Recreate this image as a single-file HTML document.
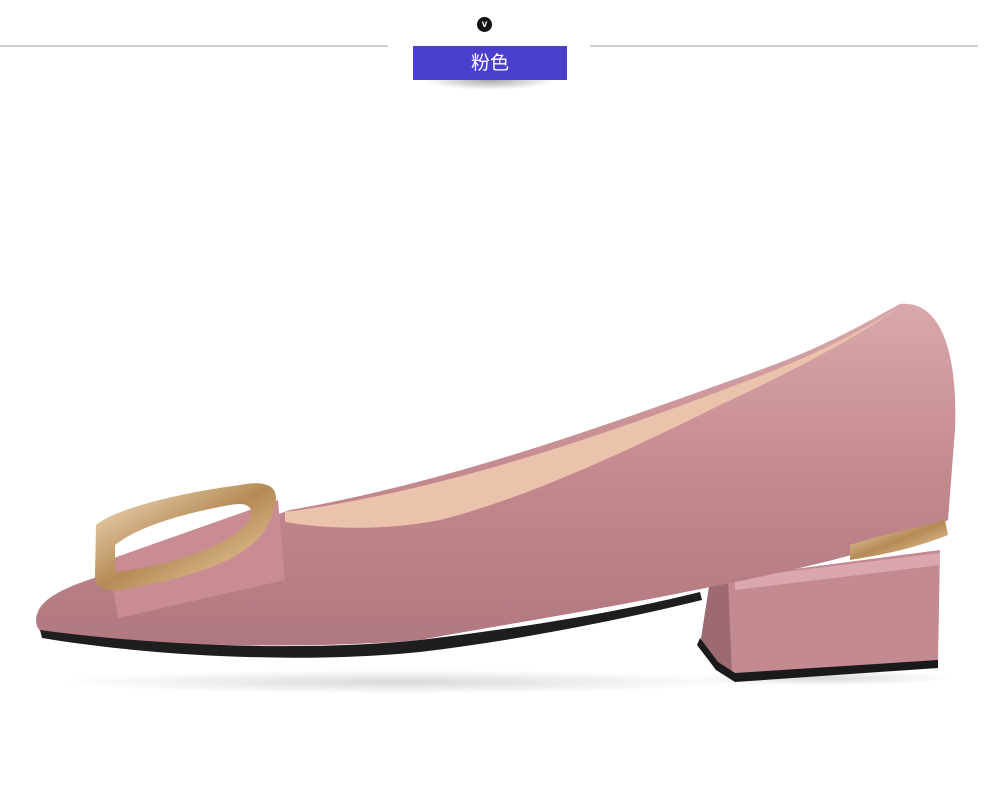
<!DOCTYPE html>
<html><head><meta charset="utf-8"><style>
body{margin:0;width:990px;height:793px;background:#fff;overflow:hidden;position:relative;font-family:"Liberation Sans","Noto Sans CJK SC",sans-serif}
.l{position:absolute;top:45px;height:2px;background:#d0d0d0}
.tab{position:absolute;left:413px;top:46px;width:154px;height:34px;background:#4a3fcc;color:#fff;font-size:19px;text-align:center;line-height:36px}
.sh{position:absolute;left:425px;top:80px;width:130px;height:10px;background:radial-gradient(ellipse at 50% 0,rgba(0,0,0,.35),rgba(0,0,0,0) 70%)}
.v{position:absolute;left:477px;top:17px;width:15px;height:15px;border-radius:50%;background:#111;color:#fff;font-size:10px;font-weight:bold;text-align:center;line-height:15px}
</style></head><body>
<div class="l" style="left:0;width:388px"></div>
<div class="l" style="left:590px;width:388px"></div>
<div class="v">v</div>
<div class="tab">粉色</div><div class="sh"></div>
<svg width="990" height="793" style="position:absolute;left:0;top:0">
<defs>
<linearGradient id="p" x1="0" y1="0" x2="0" y2="1"><stop offset="0" stop-color="#d9a8ac"/><stop offset=".5" stop-color="#c4898f"/><stop offset="1" stop-color="#b07880"/></linearGradient>
<linearGradient id="g" x1="0" y1="0" x2="1" y2="1"><stop offset="0" stop-color="#f7e3c6"/><stop offset=".5" stop-color="#b58a55"/><stop offset="1" stop-color="#f3d9b0"/></linearGradient>
<radialGradient id="sd" cx=".5" cy=".5" r=".5"><stop offset="0" stop-color="rgba(0,0,0,.15)"/><stop offset="1" stop-color="rgba(0,0,0,0)"/></radialGradient>
</defs>
<ellipse cx="400" cy="682" rx="340" ry="12" fill="url(#sd)"/>
<ellipse cx="820" cy="678" rx="130" ry="8" fill="url(#sd)"/>
<!-- heel -->
<path d="M710,580 L940,550 L938,662 L735,675 L718,668 Z" fill="#c48a92"/>
<path d="M710,580 L728,577 L732,675 L718,668 L700,645 Z" fill="#9d6a72"/>
<path d="M697,645 L716,670 L735,682 L938,668 L938,660 L735,673 L718,662 L700,638 Z" fill="#1a1a1a"/>
<path d="M735,578 L940,553 L940,565 L735,590 Z" fill="#d9a7ad"/>
<!-- upper -->
<path d="M38,612 C45,592 90,578 130,568 L290,510 C460,480 620,420 760,370 C830,345 870,320 900,304 C940,300 958,350 955,430 L948,520 C900,545 820,565 720,585 C600,610 500,625 420,640 C300,650 150,645 45,635 C36,630 34,620 38,612 Z" fill="url(#p)"/>
<!-- lining -->
<path d="M285,512 C450,490 620,430 770,372 C830,348 870,326 898,308 C860,335 800,368 720,405 C620,455 520,500 440,520 C380,532 320,528 285,522 Z" fill="#ebc3ad"/>
<!-- sole -->
<path d="M40,630 C150,645 300,652 420,640 C520,628 620,612 700,592 L702,600 C620,620 520,640 420,652 C300,664 150,656 42,638 Z" fill="#1e1e1e"/>
<!-- bow -->
<path d="M108,560 L278,500 L285,580 L118,618 Z" fill="#c98c93"/>
<!-- buckle -->
<path d="M96,525 C120,505 200,490 240,485 C265,480 280,485 275,505 C268,540 240,570 120,590 C100,592 95,585 95,575 Z M115,545 L115,572 C160,568 230,548 250,520 C255,505 245,502 230,505 C190,512 140,525 115,545 Z" fill="url(#g)" fill-rule="evenodd"/>
<path d="M850,545 C880,535 910,530 945,520 L948,535 C910,550 880,555 850,560 Z" fill="url(#g)"/>
</svg>
</body></html>
